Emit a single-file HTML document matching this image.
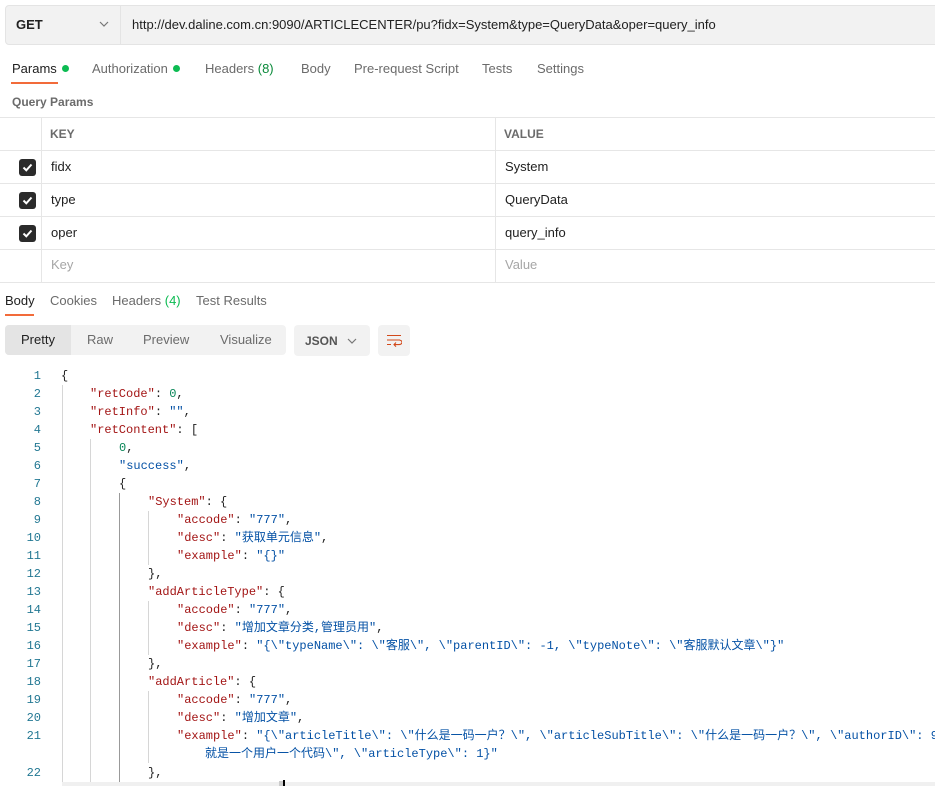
<!DOCTYPE html>
<html><head><meta charset="utf-8"><style>
*{margin:0;padding:0;box-sizing:border-box}
body{width:935px;height:786px;overflow:hidden;background:#fff;font-family:"Liberation Sans","Noto Sans CJK SC",sans-serif;color:#212121;position:relative}
.a{position:absolute;white-space:pre}
.tab{font-size:13px;color:#6b6b6b}
.dot{display:inline-block;width:7px;height:7px;border-radius:50%;background:#0cbb52;margin-left:5px;vertical-align:1px}
.g{color:#0a8a3a}
.hl{border-top:1px solid #e6e6e6}
.vl{position:absolute;width:1px;background:#e6e6e6}
.cb{position:absolute;left:19px;width:17px;height:17px;background:#2b2b2b;border-radius:3px}
.cb svg{position:absolute;left:2px;top:2px}
.td{font-size:13px;color:#212121}
.code{font-family:"Liberation Mono","Noto Sans CJK SC",monospace;font-size:12px;line-height:18px}
.ln{color:#237893;text-align:right;width:30px}
.k{color:#a31515}.s{color:#0451a5}.n{color:#098658}
.gd{position:absolute;width:1px;background:#d6d6d6}
</style></head><body>
<div class="a" style="left:5px;top:5px;width:940px;height:40px;background:#f2f2f2;border:1px solid #e4e4e4;border-radius:4px"></div>
<div class="a" style="left:120px;top:6px;width:1px;height:38px;background:#e4e4e4"></div>
<div class="a" style="left:16px;top:17px;font-size:13px;font-weight:bold;color:#212121">GET</div>
<svg class="a" style="left:99px;top:21px" width="10" height="6"><path d="M1 1 L5 5 L9 1" stroke="#777" fill="none" stroke-width="1.2"/></svg>
<div class="a" style="left:132px;top:17px;font-size:13px;color:#212121">http://dev.daline.com.cn:9090/ARTICLECENTER/pu?fidx=System&amp;type=QueryData&amp;oper=query_info</div>
<div class="a tab" style="left:12px;top:61px;color:#212121">Params<span class="dot"></span></div>
<div class="a" style="left:11px;top:82px;width:47px;height:2px;background:#f26b3a"></div>
<div class="a tab" style="left:92px;top:61px">Authorization<span class="dot"></span></div>
<div class="a tab" style="left:205px;top:61px">Headers <span class="g">(8)</span></div>
<div class="a tab" style="left:301px;top:61px">Body</div>
<div class="a tab" style="left:354px;top:61px">Pre-request Script</div>
<div class="a tab" style="left:482px;top:61px">Tests</div>
<div class="a tab" style="left:537px;top:61px">Settings</div>
<div class="a" style="left:12px;top:95px;font-size:12px;font-weight:bold;color:#6b6b6b">Query Params</div>
<div class="a hl" style="left:0;top:117px;width:935px"></div>
<div class="a hl" style="left:0;top:150px;width:935px"></div>
<div class="a hl" style="left:0;top:183px;width:935px"></div>
<div class="a hl" style="left:0;top:216px;width:935px"></div>
<div class="a hl" style="left:0;top:249px;width:935px"></div>
<div class="a hl" style="left:0;top:282px;width:935px"></div>
<div class="vl" style="left:41px;top:117px;height:165px"></div>
<div class="vl" style="left:495px;top:117px;height:165px"></div>
<div class="a" style="left:50px;top:127px;font-size:12px;font-weight:bold;color:#6b6b6b">KEY</div>
<div class="a" style="left:504px;top:127px;font-size:12px;font-weight:bold;color:#6b6b6b">VALUE</div>
<div class="cb" style="top:159px"><svg width="13" height="13"><path d="M2.5 6.5 L5.3 9.3 L10.5 3.5" stroke="#fff" stroke-width="2" fill="none"/></svg></div>
<div class="cb" style="top:192px"><svg width="13" height="13"><path d="M2.5 6.5 L5.3 9.3 L10.5 3.5" stroke="#fff" stroke-width="2" fill="none"/></svg></div>
<div class="cb" style="top:225px"><svg width="13" height="13"><path d="M2.5 6.5 L5.3 9.3 L10.5 3.5" stroke="#fff" stroke-width="2" fill="none"/></svg></div>
<div class="a td" style="left:51px;top:159px">fidx</div><div class="a td" style="left:505px;top:159px">System</div>
<div class="a td" style="left:51px;top:192px">type</div><div class="a td" style="left:505px;top:192px">QueryData</div>
<div class="a td" style="left:51px;top:225px">oper</div><div class="a td" style="left:505px;top:225px">query_info</div>
<div class="a td" style="left:51px;top:257px;color:#a6a6a6">Key</div><div class="a td" style="left:505px;top:257px;color:#a6a6a6">Value</div>
<div class="a tab" style="left:5px;top:293px;color:#212121">Body</div>
<div class="a" style="left:5px;top:314px;width:29px;height:2px;background:#f26b3a"></div>
<div class="a tab" style="left:50px;top:293px">Cookies</div>
<div class="a tab" style="left:112px;top:293px">Headers <span style="color:#0cbb52">(4)</span></div>
<div class="a tab" style="left:196px;top:293px">Test Results</div>
<div class="a" style="left:5px;top:325px;width:281px;height:30px;background:#f2f2f2;border-radius:4px"></div>
<div class="a" style="left:5px;top:325px;width:66px;height:30px;background:#e4e4e4;border-radius:4px 0 0 4px"></div>
<div class="a tab" style="left:21px;top:332px;color:#212121">Pretty</div>
<div class="a tab" style="left:87px;top:332px">Raw</div>
<div class="a tab" style="left:143px;top:332px">Preview</div>
<div class="a tab" style="left:220px;top:332px">Visualize</div>
<div class="a" style="left:294px;top:325px;width:76px;height:31px;background:#f2f2f2;border-radius:4px"></div>
<div class="a" style="left:305px;top:334px;font-size:12px;font-weight:bold;color:#555">JSON</div>
<svg class="a" style="left:347px;top:338px" width="10" height="6"><path d="M1 1 L5 5 L9 1" stroke="#777" fill="none" stroke-width="1.2"/></svg>
<div class="a" style="left:378px;top:325px;width:32px;height:31px;background:#f2f2f2;border-radius:4px"></div>
<svg class="a" style="left:386px;top:333px" width="16" height="15"><path d="M1 2.5 H15 M1 7 H14 M1 11.5 H5 M13 7 a3 2.3 0 0 1 0 4.6 H8 M10 9.5 L8 11.6 L10 13.6" stroke="#d2491b" stroke-width="1.1" fill="none"/></svg>
<div class="gd" style="left:62px;top:385px;height:401px"></div>
<div class="gd" style="left:90px;top:439px;height:347px"></div>
<div class="gd" style="left:119px;top:493px;height:293px;background:#999"></div>
<div class="gd" style="left:148px;top:511px;height:54px"></div>
<div class="gd" style="left:148px;top:601px;height:54px"></div>
<div class="gd" style="left:148px;top:691px;height:72px"></div>
<div class="a" style="left:62px;top:782px;width:873px;height:4px;background:#f0f0f0"></div>
<div class="a" style="left:279px;top:781px;width:5px;height:5px;background:#ccc"></div>
<div class="a" style="left:283px;top:780px;width:2px;height:6px;background:#000"></div>
<div class="code" style="position:absolute;left:0;top:367px;width:935px;height:419px;overflow:hidden;white-space:normal"><div class="a ln" style="left:11px;top:0">1</div><div class="a" style="left:61px;top:0">{</div><div class="a ln" style="left:11px;top:18px">2</div><div class="a" style="left:90px;top:18px"><span class="k">"retCode"</span>: <span class="n">0</span>,</div><div class="a ln" style="left:11px;top:36px">3</div><div class="a" style="left:90px;top:36px"><span class="k">"retInfo"</span>: <span class="s">""</span>,</div><div class="a ln" style="left:11px;top:54px">4</div><div class="a" style="left:90px;top:54px"><span class="k">"retContent"</span>: [</div><div class="a ln" style="left:11px;top:72px">5</div><div class="a" style="left:119px;top:72px"><span class="n">0</span>,</div><div class="a ln" style="left:11px;top:90px">6</div><div class="a" style="left:119px;top:90px"><span class="s">"success"</span>,</div><div class="a ln" style="left:11px;top:108px">7</div><div class="a" style="left:119px;top:108px">{</div><div class="a ln" style="left:11px;top:126px">8</div><div class="a" style="left:148px;top:126px"><span class="k">"System"</span>: {</div><div class="a ln" style="left:11px;top:144px">9</div><div class="a" style="left:177px;top:144px"><span class="k">"accode"</span>: <span class="s">"777"</span>,</div><div class="a ln" style="left:11px;top:162px">10</div><div class="a" style="left:177px;top:162px"><span class="k">"desc"</span>: <span class="s">"获取单元信息"</span>,</div><div class="a ln" style="left:11px;top:180px">11</div><div class="a" style="left:177px;top:180px"><span class="k">"example"</span>: <span class="s">"{}"</span></div><div class="a ln" style="left:11px;top:198px">12</div><div class="a" style="left:148px;top:198px">},</div><div class="a ln" style="left:11px;top:216px">13</div><div class="a" style="left:148px;top:216px"><span class="k">"addArticleType"</span>: {</div><div class="a ln" style="left:11px;top:234px">14</div><div class="a" style="left:177px;top:234px"><span class="k">"accode"</span>: <span class="s">"777"</span>,</div><div class="a ln" style="left:11px;top:252px">15</div><div class="a" style="left:177px;top:252px"><span class="k">"desc"</span>: <span class="s">"增加文章分类,管理员用"</span>,</div><div class="a ln" style="left:11px;top:270px">16</div><div class="a" style="left:177px;top:270px"><span class="k">"example"</span>: <span class="s">"{\"typeName\": \"客服\", \"parentID\": -1, \"typeNote\": \"客服默认文章\"}"</span></div><div class="a ln" style="left:11px;top:288px">17</div><div class="a" style="left:148px;top:288px">},</div><div class="a ln" style="left:11px;top:306px">18</div><div class="a" style="left:148px;top:306px"><span class="k">"addArticle"</span>: {</div><div class="a ln" style="left:11px;top:324px">19</div><div class="a" style="left:177px;top:324px"><span class="k">"accode"</span>: <span class="s">"777"</span>,</div><div class="a ln" style="left:11px;top:342px">20</div><div class="a" style="left:177px;top:342px"><span class="k">"desc"</span>: <span class="s">"增加文章"</span>,</div><div class="a ln" style="left:11px;top:360px">21</div><div class="a" style="left:177px;top:360px"><span class="k">"example"</span>: <span class="s">"{\"articleTitle\": \"什么是一码一户？\", \"articleSubTitle\": \"什么是一码一户？\", \"authorID\": 9</span></div><div class="a" style="left:205px;top:378px"><span class="s">就是一个用户一个代码\", \"articleType\": 1}"</span></div><div class="a ln" style="left:11px;top:397px">22</div><div class="a" style="left:148px;top:397px">},</div></div>
</body></html>
